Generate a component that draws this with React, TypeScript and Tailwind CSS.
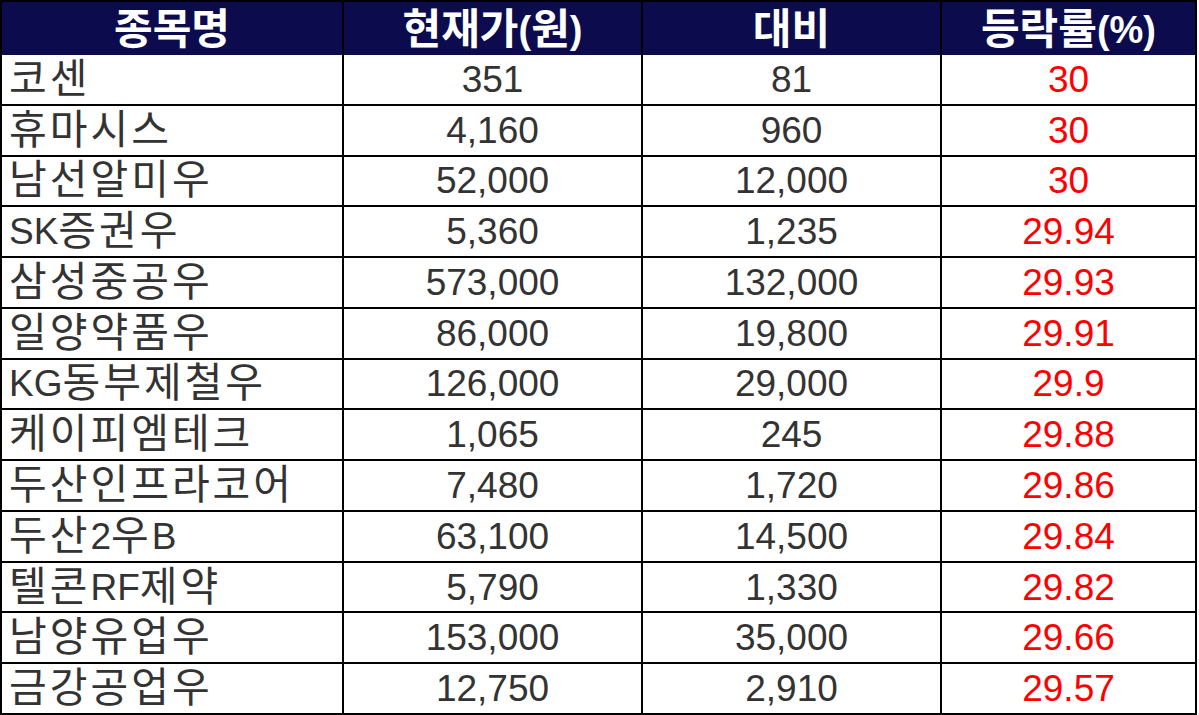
const rows: [string, string, string, string][] = [
  ["코센", "351", "81", "30"],
  ["휴마시스", "4,160", "960", "30"],
  ["남선알미우", "52,000", "12,000", "30"],
  ["SK증권우", "5,360", "1,235", "29.94"],
  ["삼성중공우", "573,000", "132,000", "29.93"],
  ["일양약품우", "86,000", "19,800", "29.91"],
  ["KG동부제철우", "126,000", "29,000", "29.9"],
  ["케이피엠테크", "1,065", "245", "29.88"],
  ["두산인프라코어", "7,480", "1,720", "29.86"],
  ["두산2우B", "63,100", "14,500", "29.84"],
  ["텔콘RF제약", "5,790", "1,330", "29.82"],
  ["남양유업우", "153,000", "35,000", "29.66"],
  ["금강공업우", "12,750", "2,910", "29.57"],
];

const headers = ["종목명", "현재가(원)", "대비", "등락률(%)"];

// 한글 부분만 조금 크게 (원본은 한글 글꼴이 라틴보다 넓다)
function Mixed({ text, hangulClass }: { text: string; hangulClass: string }) {
  const parts = text.match(/[\uAC00-\uD7A3]+|[^\uAC00-\uD7A3]+/g) || [];
  return (
    <>
      {parts.map((p, i) =>
        /[\uAC00-\uD7A3]/.test(p) ? (
          <span key={i} className={hangulClass}>
            {p}
          </span>
        ) : (
          <span key={i}>{p}</span>
        )
      )}
    </>
  );
}

export default function App() {
  return (
    <div className="bg-white w-[1199px] h-[715px] font-['Liberation_Sans','Noto_Sans_CJK_KR',sans-serif]">
      <div className="w-[1197px] h-[715px] border-2 border-black bg-black flex flex-col">
        {/* 헤더 */}
        <div className="grid grid-cols-[340px_297px_297px_253px] gap-x-[2px] h-[53px] shrink-0">
          {headers.map((h) => (
            <div
              key={h}
              className="bg-[#0b0b4e] text-white font-bold text-[38px] flex items-center justify-center leading-none pt-[2px]"
            >
              <Mixed text={h} hangulClass="text-[42px]" />
            </div>
          ))}
        </div>

        {/* 본문 */}
        <div className="flex-1 grid grid-rows-[repeat(13,minmax(0,1fr))] gap-y-[2px]">
          {rows.map(([name, price, diff, rate]) => (
            <div
              key={name}
              className="grid grid-cols-[340px_297px_297px_253px] gap-x-[2px] text-[37px] leading-none text-[#333333]"
            >
              <div className="bg-white flex items-center pl-[7px] whitespace-nowrap">
                <Mixed text={name} hangulClass="text-[41px] tracking-[3px]" />
              </div>
              <div className="bg-white flex items-center justify-center">{price}</div>
              <div className="bg-white flex items-center justify-center">{diff}</div>
              <div className="bg-white flex items-center justify-center text-[#ff0000]">{rate}</div>
            </div>
          ))}
        </div>
      </div>
    </div>
  );
}
